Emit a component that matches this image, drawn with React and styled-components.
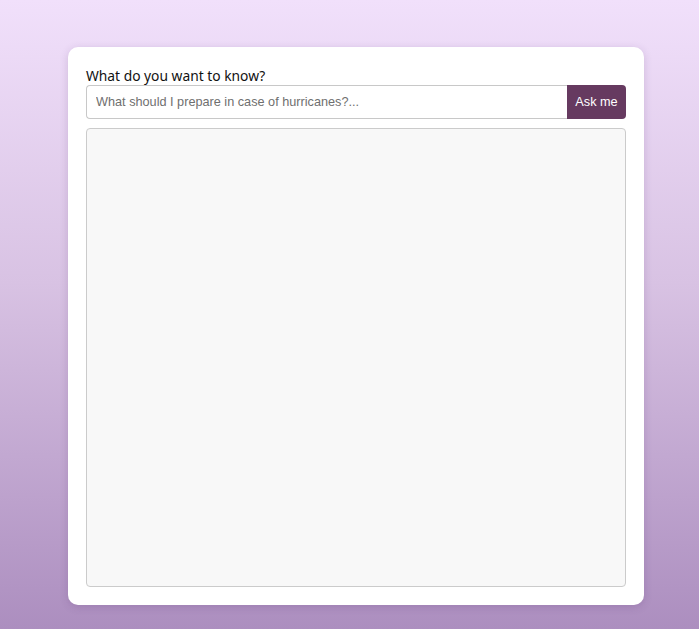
import { createGlobalStyle } from 'styled-components';
import styled from 'styled-components';

const GlobalStyle = createGlobalStyle`
  html, body {
    margin: 0;
    padding: 0;
  }
  body {
    min-height: 629px;
    background: linear-gradient(180deg, #f1e0fb 0%, #d8c2e3 45%, #ac8ebf 100%);
  }
`;

const Page = styled.div`
  padding: 47px 0 24px 68px;
`;

const Card = styled.div`
  width: 540px;
  height: 522px;
  padding: 18px;
  background: #fff;
  border-radius: 10px;
  box-shadow: 0 2px 8px rgba(80, 40, 100, 0.18);
  display: flex;
  flex-direction: column;
`;

const Label = styled.label`
  font-family: "Noto Sans", "Open Sans", sans-serif;
  font-size: 13.8px;
  line-height: 20px;
  color: #111;
  margin-top: 1px;
  margin-bottom: -1px;
`;

const AskRow = styled.form`
  display: flex;
  height: 34px;
  margin-bottom: 9px;
`;

const Question = styled.input`
  flex: 1;
  min-width: 0;
  border: 1px solid #c8c8c8;
  border-right: none;
  border-radius: 4px 0 0 4px;
  padding: 0 9px;
  font-family: "Liberation Sans", Arial, sans-serif;
  font-size: 12.7px;
  color: #222;
  outline: none;
  &::placeholder {
    color: #6f6f6f;
  }
`;

const AskButton = styled.button`
  width: 59px;
  border: none;
  border-radius: 0 4px 4px 0;
  background: #663a60;
  color: #fff;
  font-family: "Liberation Sans", Arial, sans-serif;
  font-size: 12.7px;
  cursor: pointer;
`;

const Answer = styled.div`
  flex: 1;
  background: #f8f8f8;
  border: 1px solid #cbcbcb;
  border-radius: 4px;
`;

function App() {
  return (
    <>
      <GlobalStyle />
      <Page>
        <Card>
          <Label htmlFor="q">What do you want to know?</Label>
          <AskRow onSubmit={(e) => e.preventDefault()}>
            <Question id="q" placeholder="What should I prepare in case of hurricanes?..." />
            <AskButton type="submit">Ask me</AskButton>
          </AskRow>
          <Answer />
        </Card>
      </Page>
    </>
  );
}

export default App;
